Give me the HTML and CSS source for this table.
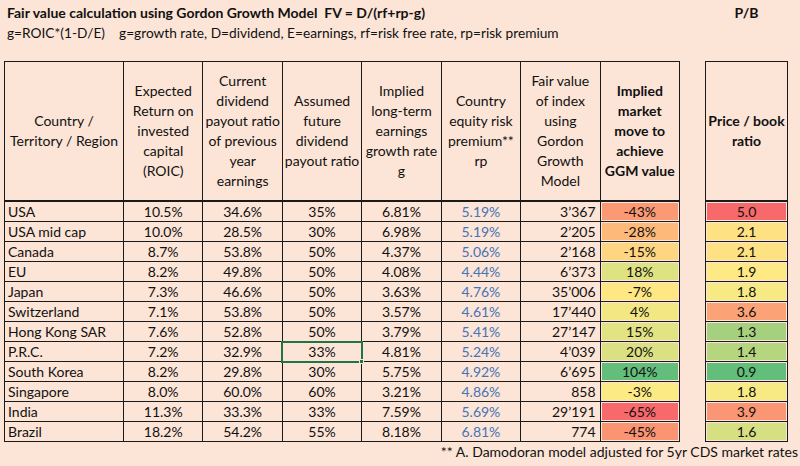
FILE: index.html
```html
<!DOCTYPE html>
<html>
<head>
<meta charset="utf-8">
<link rel="stylesheet" href="styles.css">
</head>
<body>
<div class="page">
  <div class="sheet">
    <div class="heading">
      <div class="title">Fair value calculation using Gordon Growth Model&nbsp; FV = D/(rf+rp-g)</div>
      <div class="subtitle">g=ROIC*(1-D/E)&nbsp;&nbsp;&nbsp; g=growth rate, D=dividend, E=earnings, rf=risk free rate, rp=risk premium</div>
    </div>
    <div class="pblabel">P/B</div>

    <table class="grid main">
      <colgroup>
        <col class="c-country"><col><col><col><col><col><col><col>
      </colgroup>
      <thead>
        <tr>
          <th>Country /<br>Territory / Region</th>
          <th>Expected<br>Return on<br>invested<br>capital<br>(ROIC)</th>
          <th>Current<br>dividend<br>payout ratio<br>of previous<br>year<br>earnings</th>
          <th>Assumed<br>future<br>dividend<br>payout ratio</th>
          <th>Implied<br>long-term<br>earnings<br>growth rate<br>g</th>
          <th>Country<br>equity risk<br>premium**<br>rp</th>
          <th>Fair value<br>of index<br>using<br>Gordon<br>Growth<br>Model</th>
          <th class="strong">Implied<br>market<br>move to<br>achieve<br>GGM value</th>
        </tr>
      </thead>
      <tbody>
        <tr><td class="name">USA</td><td>10.5%</td><td>34.6%</td><td>35%</td><td>6.81%</td><td class="rp">5.19%</td><td class="fv">3’367</td><td class="scale" style="background:#FB9974">-43%</td></tr>
        <tr><td class="name">USA mid cap</td><td>10.0%</td><td>28.5%</td><td>30%</td><td>6.98%</td><td class="rp">5.19%</td><td class="fv">2’205</td><td class="scale" style="background:#FCB97A">-28%</td></tr>
        <tr><td class="name">Canada</td><td>8.7%</td><td>53.8%</td><td>50%</td><td>4.37%</td><td class="rp">5.06%</td><td class="fv">2’168</td><td class="scale" style="background:#FED580">-15%</td></tr>
        <tr><td class="name">EU</td><td>8.2%</td><td>49.8%</td><td>50%</td><td>4.08%</td><td class="rp">4.44%</td><td class="fv">6’373</td><td class="scale" style="background:#DEE282">18%</td></tr>
        <tr><td class="name">Japan</td><td>7.3%</td><td>46.6%</td><td>50%</td><td>3.63%</td><td class="rp">4.76%</td><td class="fv">35’006</td><td class="scale" style="background:#FFE783">-7%</td></tr>
        <tr><td class="name">Switzerland</td><td>7.1%</td><td>53.8%</td><td>50%</td><td>3.57%</td><td class="rp">4.61%</td><td class="fv">17’440</td><td class="scale" style="background:#F2E783">4%</td></tr>
        <tr><td class="name">Hong Kong SAR</td><td>7.6%</td><td>52.8%</td><td>50%</td><td>3.79%</td><td class="rp">5.41%</td><td class="fv">27’147</td><td class="scale" style="background:#E2E382">15%</td></tr>
        <tr><td class="name">P.R.C.</td><td>7.2%</td><td>32.9%</td><td class="selected">33%</td><td>4.81%</td><td class="rp">5.24%</td><td class="fv">4’039</td><td class="scale" style="background:#DBE182">20%</td></tr>
        <tr><td class="name">South Korea</td><td>8.2%</td><td>29.8%</td><td>30%</td><td>5.75%</td><td class="rp">4.92%</td><td class="fv">6’695</td><td class="scale" style="background:#63BE7B">104%</td></tr>
        <tr><td class="name">Singapore</td><td>8.0%</td><td>60.0%</td><td>60%</td><td>3.21%</td><td class="rp">4.86%</td><td class="fv">858</td><td class="scale" style="background:#FCEA84">-3%</td></tr>
        <tr><td class="name">India</td><td>11.3%</td><td>33.3%</td><td>33%</td><td>7.59%</td><td class="rp">5.69%</td><td class="fv">29’191</td><td class="scale" style="background:#F8696B">-65%</td></tr>
        <tr><td class="name">Brazil</td><td>18.2%</td><td>54.2%</td><td>55%</td><td>8.18%</td><td class="rp">6.81%</td><td class="fv">774</td><td class="scale" style="background:#FA9473">-45%</td></tr>
      </tbody>
    </table>

    <table class="grid pb">
      <thead>
        <tr><th class="strong">Price / book<br>ratio</th></tr>
      </thead>
      <tbody>
        <tr><td class="scale" style="background:#F8696B">5.0</td></tr>
        <tr><td class="scale" style="background:#FEE182">2.1</td></tr>
        <tr><td class="scale" style="background:#FEE182">2.1</td></tr>
        <tr><td class="scale" style="background:#FFE984">1.9</td></tr>
        <tr><td class="scale" style="background:#F7E983">1.8</td></tr>
        <tr><td class="scale" style="background:#FBA376">3.6</td></tr>
        <tr><td class="scale" style="background:#A5D17E">1.3</td></tr>
        <tr><td class="scale" style="background:#B5D67F">1.4</td></tr>
        <tr><td class="scale" style="background:#63BE7B">0.9</td></tr>
        <tr><td class="scale" style="background:#F7E983">1.8</td></tr>
        <tr><td class="scale" style="background:#FA9674">3.9</td></tr>
        <tr><td class="scale" style="background:#D6DF82">1.6</td></tr>
      </tbody>
    </table>
  </div>
  <p class="foot">** A. Damodoran model adjusted for 5yr CDS market rates</p>
</div>
</body>
</html>
```

FILE: styles.css
```css
html, body {
  margin: 0;
  padding: 0;
  background: #FCE4D6;
}

body {
  font-family: "Lato", "Liberation Sans", sans-serif;
  font-size: 14px;
  color: #111;
  width: 800px;
  height: 466px;
  overflow: hidden;
}

.page {
  padding: 3px 2px 0 4px;
}

.sheet {
  display: grid;
  grid-template-columns: 676px 83px;
  column-gap: 25px;
  row-gap: 18px;
}

.heading {
  line-height: 20px;
}

.title {
  font-weight: bold;
  padding-left: 3px;
  white-space: nowrap;
}

.subtitle {
  padding-left: 3px;
  font-size: 13.7px;
  white-space: nowrap;
}

.pblabel {
  font-weight: bold;
  text-align: center;
  line-height: 20px;
}

.grid {
  border-collapse: collapse;
  table-layout: fixed;
  width: 100%;
  border: 1.5px solid #1a1a1a;
}

.main col.c-country {
  width: 119px;
}

.grid th {
  height: 138px;
  font-weight: normal;
  line-height: 20px;
  text-align: center;
  vertical-align: middle;
  white-space: nowrap;
  padding: 0;
  border-left: 1px solid #1a1a1a;
  border-right: 1px solid #1a1a1a;
  border-bottom: 2px solid #1a1a1a;
}

.grid th.strong {
  font-weight: bold;
}

.grid td {
  height: 19px;
  line-height: 19px;
  padding: 0;
  text-align: center;
  white-space: nowrap;
  border: 1px solid #1a1a1a;
}

.grid td.name {
  text-align: left;
  padding-left: 3px;
}

.grid td.rp {
  color: #4574B8;
}

.grid td.fv {
  text-align: right;
  padding-right: 4px;
}

.grid td.scale {
  box-shadow: inset 0 0 0 1px #FCE4D6;
}

.grid td.selected {
  position: relative;
  outline: 2px solid #217346;
  outline-offset: -1px;
}

.grid td.selected::after {
  content: "";
  position: absolute;
  right: -3px;
  bottom: -3px;
  width: 5px;
  height: 5px;
  background: #217346;
  border: 1px solid #FCE4D6;
  box-sizing: border-box;
}

.foot {
  margin: 0;
  line-height: 20px;
  text-align: right;
}
```
